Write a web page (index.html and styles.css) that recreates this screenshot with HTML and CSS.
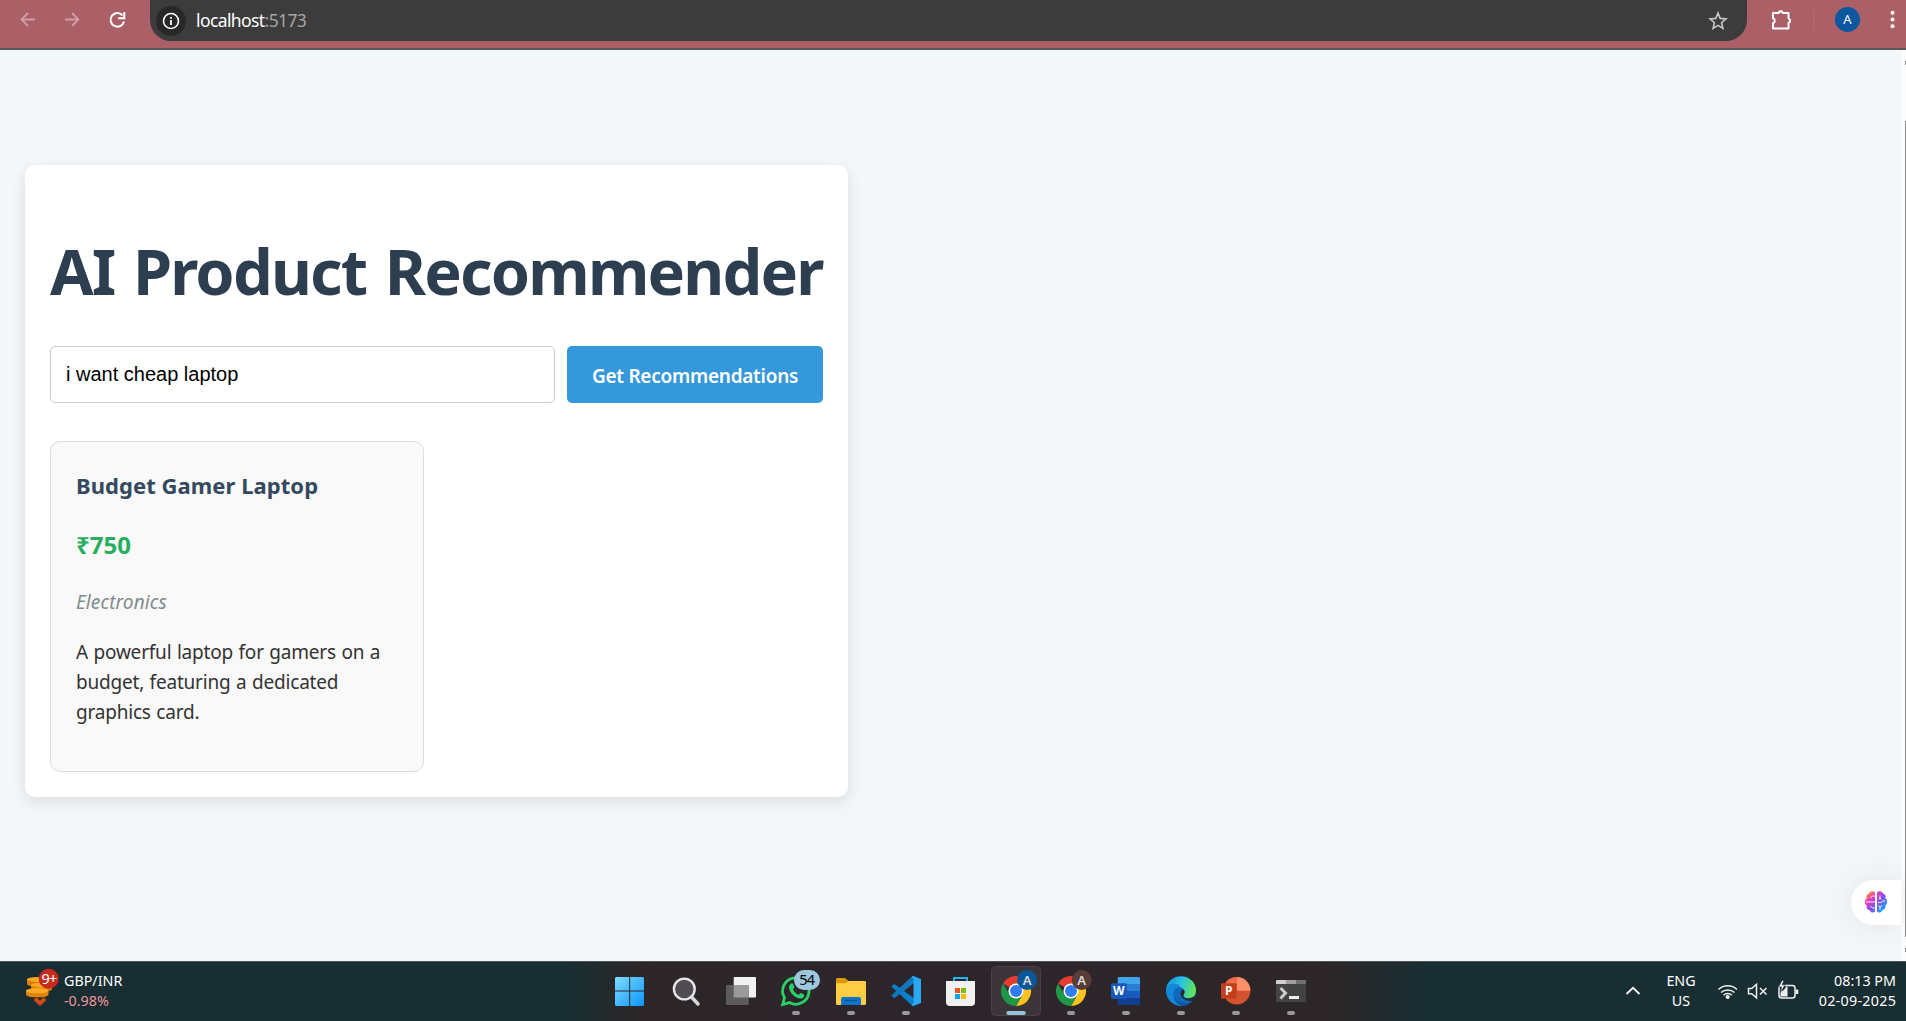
FILE: index.html
```html
<!DOCTYPE html>
<html lang="en">
<head>
<meta charset="utf-8">
<title>AI Product Recommender</title>
<link rel="stylesheet" href="styles.css">
</head>
<body>
<header class="toolbar">
  <svg class="nav-icons" width="150" height="48" viewBox="0 0 150 48" fill="none">
    <g stroke="#cf9da2" stroke-width="1.8"><path d="M35 19.500H21.500M28 13l-6.500 6.500 6.500 6.500M65 19.500h13.500M72 13l6.500 6.500-6.500 6.500"/></g>
    <path d="M122.500 15.300A6.800 6.800 0 1 0 124 21.500M124.300 12v6.200H118" stroke="#fff" stroke-width="2"/>
  </svg>
  <div class="address">
    <svg width="30" height="30" viewBox="0 0 30 30"><circle cx="15" cy="15" r="15" fill="#282828"/><circle cx="15" cy="15" r="7.500" fill="none" stroke="#fff" stroke-width="1.600"/><path d="M15 14v5M15 11v1.800" stroke="#fff" stroke-width="1.800"/></svg>
    <span class="url">localhost<span class="port">:5173</span></span>
    <svg class="star" width="20" height="20" viewBox="0 0 20 20"><path d="M10 2l2.200 5.400 5.800.5-4.400 3.800 1.300 5.700L10 14.400l-4.900 3 1.300-5.700L2 7.900l5.800-.5z" fill="none" stroke="#c7c7c7" stroke-width="1.600"/></svg>
  </div>
  <svg class="tools" width="159" height="48" viewBox="0 0 159 48">
    <path d="M26 13h5.500a2.500 2.500 0 0 1 4.500 0h5.500v5.500a2.400 2.400 0 0 1 0 4.500v5.500H26v-5.200a2.800 2.800 0 0 0 0-5.200z" fill="none" stroke="#fff" stroke-width="2" stroke-linejoin="round"/>
    <path d="M31 12.500a2.800 2.800 0 0 1 5.500 0zM42 18a2.600 2.600 0 0 1 0 5z" fill="#fff"/>
    <path d="M67 10v20" stroke="#b86a72"/>
    <circle cx="100.500" cy="19.500" r="12.500" fill="#0b57a0"/><text x="100.500" y="24.200" text-anchor="middle" class="avatar">A</text>
    <g fill="#fff"><circle cx="145.500" cy="12.800" r="2"/><circle cx="145.500" cy="19.500" r="2"/><circle cx="145.500" cy="26.300" r="2"/></g>
  </svg>
</header>
<div class="viewport">
  <main class="page">
    <section class="panel">
      <h1 class="title">AI Product Recommender</h1>
      <form class="search">
        <input class="query" type="text" value="i want cheap laptop">
        <button class="submit" type="button">Get Recommendations</button>
      </form>
      <article class="product">
        <h2 class="name">Budget Gamer Laptop</h2>
        <p class="price">₹750</p>
        <p class="category">Electronics</p>
        <p class="description">A powerful laptop for gamers on a<br>budget, featuring a dedicated<br>graphics card.</p>
      </article>
    </section>
    <div class="assistant">
      <svg width="24" height="24" viewBox="0 0 24 24">
        <defs><linearGradient id="brain" x1="0" y1="0" x2="1" y2="1"><stop offset="0.05" stop-color="#ffb020"/><stop offset=".3" stop-color="#e83bb8"/><stop offset=".55" stop-color="#8b4bf0"/><stop offset=".85" stop-color="#10a4ff"/></linearGradient></defs>
        <path d="M11 2.500C9 .2 5.500 1 5 3.500 2.500 4 1.800 6.500 2.700 8.200.3 9.500.3 14 2.700 15.500c-.7 2.500 1 4.500 3 4.700C6.700 23 9.800 23.200 11 21.500zM13 2.500c2-2.300 5.500-1.500 6 1 2.500.5 3.200 3 2.300 4.700 2.400 1.300 2.400 5.800 0 7.300.7 2.500-1 4.500-3 4.700-1 2.800-4.100 3-5.300 1.300z" fill="url(#brain)"/>
        <path d="M11 6H8.500L6.500 8M2 12h9M11 18H8.500l-2-2M14 12.500h3l2-1.500h2M16 5.500V8l-1.500 1.500M16 8l1.500 1.500M16 20v-3l-1.500-1.500M16 17l2-1.500" fill="none" stroke="#fff" stroke-width=".9"/>
      </svg>
    </div>
  </main>
  <div class="scrollbar"><i class="arrow"></i><i class="thumb"></i><i class="arrow"></i></div>
</div>
<footer class="taskbar">
  <div class="widget">
    <svg width="36" height="60" viewBox="0 0 36 60">
      <path d="M3 18v5c0 3.500 20 3.500 20 0v-5z" fill="#d97c06"/><ellipse cx="13" cy="18.500" rx="10" ry="2.600" fill="#f9a825"/>
      <path d="M7 23.500v4.500c0 3.500 21 3.500 21 0v-4.500z" fill="#dd7f06"/><ellipse cx="17.500" cy="24" rx="10.500" ry="2.600" fill="#f8a21d"/>
      <path d="M2 29.500v4c0 3.800 22.500 3.800 22.500 0v-4z" fill="#e08408"/><ellipse cx="13.200" cy="29.800" rx="11.200" ry="2.700" fill="#fba921"/>
      <path d="M11 37.500l5 4.800 5-4.800" fill="none" stroke="#cf4a14" stroke-width="4"/>
      <circle cx="24.700" cy="17.700" r="10" fill="#c42b1c"/><text x="25" y="23" text-anchor="middle" class="count count-light">9+</text>
    </svg>
    <div class="rate">GBP/INR<br><span class="down">-0.98%</span></div>
  </div>
  <nav class="apps">
    <svg viewBox="0 0 55 60"><defs><linearGradient id="win" x1="0" y1="0" x2="1" y2="1"><stop offset="0" stop-color="#80dcff"/><stop offset="1" stop-color="#0a95ff"/></linearGradient></defs><path d="M14 16h13.200v13.500H13V17zM28.200 16H41l1 1v12.500H28.200zM13 30.500h14.200V45H14l-1-1zM28.200 30.500H42V44l-1 1H28.200z" fill="url(#win)"/></svg>
    <svg viewBox="0 0 55 60"><path d="M34.500 36l6.500 7" stroke="#d5d8dc" stroke-width="3.500" stroke-linecap="round"/><circle cx="27.300" cy="28" r="10.400" fill="#504c50" stroke="#e4e6e9" stroke-width="2.400"/></svg>
    <svg viewBox="0 0 55 60"><rect x="21.700" y="16" width="22.300" height="20.500" rx="1" fill="#f1f1f1"/><rect x="14" y="24" width="22.700" height="20" rx="1" fill="#5d5c5d"/><path d="M21.700 24h14a1 1 0 0 1 1 1v11.500h-15z" fill="#9b9a9b"/></svg>
    <svg viewBox="0 0 55 60"><path d="M15.700 43.500l1.800-6.700A13.200 13.200 0 1 1 22.500 41.600z" fill="none" stroke="#25d366" stroke-width="2.800"/><path d="M23.300 23.200c1-1.500 2.500-1.300 3 .2l1 2.600c.3.900-1.600 2-1.200 2.700 1.300 2.500 3 4 5.400 5 .8.300 1.700-2 2.600-1.600l2.700 1.300c1.300.8-.5 4.200-3.300 4.200-5.300-.2-11.500-6.500-11.500-11.300 0-1.300.6-2.300 1.300-3.100z" fill="#25d366"/><rect x="27" y="9" width="26" height="20" rx="10" fill="#9dc7dc"/><text x="39.700" y="24" text-anchor="middle" class="count">54</text><rect class="dot" x="25" y="50" width="8" height="4" rx="2"/></svg>
    <svg viewBox="0 0 55 60"><path d="M14 18l1-1h8l3.500 3H31v5H14z" fill="#dc9a05"/><path d="M14 22.300h9.500l3-2.300H43l1 1v22l-1 1H15l-1-1z" fill="#ffcd43"/><path d="M19 44v-6q0-2 2-2h16q2 0 2 2v6z" fill="#0e74cc"/><path d="M22.500 39.500h12.500" stroke="#075195" stroke-width="1.300"/><rect class="dot" x="25" y="50" width="8" height="4" rx="2"/></svg>
    <svg viewBox="0 0 55 60"><path d="M14.300 25.500l3-2.500L39 38.500l-2 6.500h-1.500z" fill="#0a7fc9"/><path d="M14.300 34.500l3 2.700L38.500 21 37 15h-1.500z" fill="#1277bd"/><path d="M36.500 15L44 18v24l-7.500 3-2-1 2-2V18l-2-2z" fill="#29a9f2"/><rect class="dot" x="25" y="50" width="8" height="4" rx="2"/></svg>
    <svg viewBox="0 0 55 60"><path d="M22 22v-5h13v5" fill="none" stroke="#21b5ec" stroke-width="2"/><path d="M14 20h29v21q0 4-4 4H18q-4 0-4-4z" fill="#f1f1f1"/><path fill="#f25022" d="M23 27h5v5h-5z"/><path fill="#7fba00" d="M29 27h5v5h-5z"/><path fill="#00a4ef" d="M23 33h5v5h-5z"/><path fill="#ffb900" d="M29 33h5v5h-5z"/></svg>
    <svg viewBox="0 0 55 60"><rect x="4.500" y="5.500" width="49" height="49" rx="4" fill="#3b3438" stroke="#484146"/><g id="chrome"><path d="M29 30L16 22.500A15 15 0 0 1 42 22.500H29z" fill="#e53e30"/><path d="M29 22.500h13A15 15 0 0 1 29 45l6.500-11.300z" fill="#fcc31e"/><path d="M16 22.500A15 15 0 0 0 29 45l6.500-11.300L22.500 33.700z" fill="#1e9748"/><circle cx="29" cy="30" r="7.600" fill="#fff"/><circle cx="29" cy="30" r="6" fill="#2f7df0"/></g><circle cx="40" cy="19" r="10" fill="#0a579b"/><text x="40" y="23.500" text-anchor="middle" class="profile">A</text><rect x="19.300" y="50" width="19.500" height="4" rx="2" fill="#96c3d9"/></svg>
    <svg viewBox="0 0 55 60"><use href="#chrome"/><circle cx="39.700" cy="19" r="10" fill="#573d35"/><text x="39.700" y="23.500" text-anchor="middle" class="profile">A</text><rect class="dot" x="25" y="50" width="8" height="4" rx="2"/></svg>
    <svg viewBox="0 0 55 60"><path fill="#41a5ee" d="M20.700 17l1-1H42l1 1v6H20.700z"/><path fill="#2b7cd3" d="M20.700 23H43v7H20.700z"/><path fill="#185abd" d="M20.700 30H43v7H20.700z"/><path fill="#103f91" d="M20.700 37H43v6l-1 1H21.700l-1-1z"/><rect x="14" y="22.300" width="15.700" height="15.400" rx="1" fill="#1858b8"/><text x="21.700" y="34.300" text-anchor="middle" class="letter">W</text><rect class="dot" x="25" y="50" width="8" height="4" rx="2"/></svg>
    <svg viewBox="0 0 55 60"><defs><linearGradient id="edge" x1="0" y1=".3" x2="1" y2=".5"><stop offset="0" stop-color="#1495df"/><stop offset=".5" stop-color="#2cc2df"/><stop offset="1" stop-color="#63e650"/></linearGradient></defs><circle cx="29" cy="30" r="15" fill="#0c69bd"/><path d="M14 29C15 11 43 11 44 29c0 7-5 8.500-9 8-3-.5-4.500-2-3-4 2-3-1-7-5-7-6 0-9 5-9 9z" fill="url(#edge)"/><path d="M14 29c0-6 10-9 15-3-5-1-9 4-7 10 1 4 4 7 8 9C21 45 14 38 14 29z" fill="#1587d8"/><path d="M22 32c-1 8 8 13 19 8-3 3-7 5-11 5-6-2-9-7-8-13z" fill="#10539e"/><path d="M31 28.500c2 .8 2 3 1 4.500-2 3 1 4.500 4 4.500 3.500 0 6-1.300 8.500-3.500v4l-2.500 1.500c-6 1.500-13-1-13.500-7-.1-2 1-3.600 2.500-4z" fill="#2b272c"/><rect class="dot" x="25" y="50" width="8" height="4" rx="2"/></svg>
    <svg viewBox="0 0 55 60"><circle cx="29.700" cy="29.700" r="13.700" fill="#d35230"/><path d="M29.700 16v13.700H16A13.700 13.700 0 0 1 29.700 16z" fill="#ed6c47"/><path d="M29.700 16a13.700 13.700 0 0 1 13.700 13.700H29.700z" fill="#ff8f6b"/><rect x="14" y="22.300" width="15.700" height="15.400" rx="1" fill="#c43e1c"/><text x="21.700" y="34.300" text-anchor="middle" class="letter">P</text><rect class="dot" x="25" y="50" width="8" height="4" rx="2"/></svg>
    <svg viewBox="0 0 55 60"><rect x="14" y="19" width="30" height="22" rx="1" fill="#434343"/><path fill="#d0d0d0" d="M14 23v-3l1-1h9v4z"/><path fill="#a0a0a0" d="M24 19h10v4H24z"/><path fill="#707070" d="M34 19h9l1 1v3H34z"/><path d="M18.500 27l5 5-5 5.500" fill="none" stroke="#ccc" stroke-width="3"/><path d="M27 36.500h10" stroke="#eee" stroke-width="3"/><rect class="dot" x="25" y="50" width="8" height="4" rx="2"/></svg>
  </nav>
  <div class="tray">
    <svg width="16" height="60" viewBox="0 0 16 60"><path d="M1.500 33L8 26.800l6.500 6.200" fill="none" stroke="#f2f2f2" stroke-width="1.900"/></svg>
    <div class="lang">ENG<br>US</div>
    <svg class="status" width="84" height="60" viewBox="0 0 84 60" fill="none" stroke="#eef1f1" stroke-width="1.500">
      <path d="M1.500 28.500a13.600 13.600 0 0 1 18.500 0M4 31.500a10 10 0 0 1 13.500 0M6.500 34.300a6.200 6.200 0 0 1 8.500 0"/><circle cx="10.700" cy="36" r="1.300" fill="#eee"/>
      <path d="M31.500 27.500h3.200l4.800-4.200v13.600l-4.800-4.200h-3.200zM43 27l6.500 6.500M49.500 27L43 33.500"/>
      <rect x="62" y="24.500" width="16" height="12.500" rx="2.500"/><path d="M80 28.500v4.500" stroke-width="2.500"/><path d="M63.500 35.500v-5.500l3-.5 3-4h1v10z" fill="#eee" stroke="none"/><path d="M65 19.500l-3.500 6.500h3l-1 5.500 4.500-7.500h-3l2-4.500z" fill="#fff" stroke="#192e32" stroke-width=".6"/>
    </svg>
    <div class="clock">08:13 PM<br><span class="date">02-09-2025</span></div>
  </div>
</footer>
</body>
</html>
```
FILE: styles.css
```css
* { box-sizing: border-box; }
body { margin: 0; height: 1021px; overflow: hidden; display: flex; flex-direction: column; font-family: "Noto Sans", "Open Sans", sans-serif; }
svg { display: block; flex: none; }
.toolbar { height: 50px; flex: none; display: flex; align-items: flex-start; background: #aa6066; border-bottom: 2px solid #5b5658; }
.address { flex: 1; height: 41px; padding: 0 19px 0 6px; display: flex; align-items: center; background: #3c3c3c; border-radius: 0 0 21px 21px; }
.url { margin-left: 10px; padding-bottom: 1px; flex: 1; color: #fff; font-size: 17.5px; letter-spacing: -.6px; }
.port { color: #a5a5a5; }
.avatar { font: 13px "Noto Sans", sans-serif; fill: #fff; }
.viewport { flex: 1; display: flex; background: #f3f7fa; }
.page { flex: 1; position: relative; padding: 115px 0 0 25px; }
.panel { width: 823px; height: 632px; padding: 25px; background: #fff; border-radius: 10px; box-shadow: 0 5px 15px rgba(0,0,0,.1); }
.title { margin: 43px 0 38px; height: 75px; line-height: 75px; font-size: 63px; font-weight: 700; letter-spacing: -1.8px; word-spacing: 3.8px; color: #2c3e50; white-space: nowrap; }
.search { display: flex; gap: 12px; margin: 0 0 38px; height: 57px; }
.query { flex: 1; min-width: 0; padding: 0 15px; border: 1px solid #ccc; border-radius: 5px; font: 20px "Liberation Sans", Arial, sans-serif; color: #000; }
.submit { width: 256px; padding: 2px 0 0; border: 0; border-radius: 5px; background: #3498db; color: #fff; font: 600 19px "Noto Sans", sans-serif; letter-spacing: -.26px; white-space: nowrap; }
.product { width: 374px; height: 331px; padding: 24px 25px; border: 1px solid #ddd; border-radius: 10px; background: #f9f9f9; color: #333; white-space: nowrap; }
.name { margin: 0; font-size: 22px; line-height: 38px; letter-spacing: .06px; color: #34495e; }
.price { margin: 22px 0 0; font-size: 24px; font-weight: 700; line-height: 38px; color: #27ae60; }
.category { margin: 23px 0 0; font-size: 19px; font-style: italic; line-height: 30px; letter-spacing: .1px; color: #7f8c8d; }
.description { margin: 20px 0 0; font-size: 19px; line-height: 30px; letter-spacing: -.2px; word-spacing: .8px; }
.assistant { position: absolute; right: 0; top: 830px; width: 50px; height: 45px; padding: 10px 0 0 13px; background: #fff; border-radius: 23px 0 0 23px; box-shadow: 0 0 30px rgba(0,0,0,.08); }
.scrollbar { width: 5px; background: #fcfcfc; display: flex; flex-direction: column; align-items: flex-end; padding: 11px 0 9px; }
.arrow { width: 1px; height: 4px; background: #8b8b8b; }
.thumb { width: 1px; flex: 1; margin: 56px 0 11px; background: #8b8b8b; }
.taskbar { height: 60px; flex: none; display: flex; border-top: 1px solid #4d5557; background: linear-gradient(90deg, #182e32 0 570px, #2d2628 640px, #2c252b 900px, #2d2628 1330px, #192e32 1420px); }
.taskbar svg { margin-top: -1px; }
.widget { width: 602px; padding-left: 24px; display: flex; gap: 4px; color: #fff; }
.rate, .lang, .clock { padding-top: 9px; font-size: 14.3px; line-height: 20px; white-space: nowrap; color: #fff; }
.rate .down { color: #f0949c; }
.apps { display: flex; }
.apps svg { width: 55px; height: 60px; }
.count { font: 14.5px "Noto Sans", sans-serif; letter-spacing: -.8px; fill: #000; }
.count-light { fill: #fff; }
.profile { font: 600 13px "Noto Sans", sans-serif; fill: #ddd; }
.letter { font: 700 12px "Noto Sans", sans-serif; fill: #fff; }
.dot { fill: #9b969a; }
.tray { flex: 1; display: flex; justify-content: flex-end; padding-right: 10px; }
.lang { width: 50px; margin-left: 15px; text-align: center; }
.status { margin-left: 11px; }
.clock { width: 95px; text-align: right; }
.date { letter-spacing: .3px; margin-right: -.3px; }
```
